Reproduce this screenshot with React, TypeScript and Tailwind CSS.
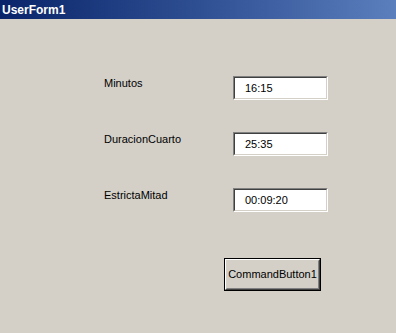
import React from "react";

const font = { fontFamily: '"Liberation Sans", Arial, sans-serif' };

function Box({ value }: { value: string }) {
  return (
    <div className="w-[95px] h-[24px] border border-t-[#808080] border-l-[#808080] border-b-white border-r-white">
      <div className="w-full h-full bg-white border border-t-[#404040] border-l-[#404040] border-b-[#d4d0c8] border-r-[#d4d0c8] flex items-center pl-[10px] text-[11px] text-black">
        {value}
      </div>
    </div>
  );
}

function Row({ label, value }: { label: string; value: string }) {
  return (
    <div className="flex items-start">
      <div className="w-[129px] pt-[1px] text-[11px] text-black leading-[13px]">{label}</div>
      <Box value={value} />
    </div>
  );
}

export default function App() {
  return (
    <div className="w-[396px] h-[333px] bg-[#d4d0c8] overflow-hidden" style={font}>
      <div className="h-[19px] bg-gradient-to-r from-[#0a246a] via-[#2f4f93] to-[#5b7fbd] flex items-center pl-[2px]">
        <span className="text-white font-bold text-[12px] leading-none">UserForm1</span>
      </div>
      <div className="pl-[104px] pt-[57px] flex flex-col gap-[32px]">
        <Row label="Minutos" value="16:15" />
        <Row label="DuracionCuarto" value="25:35" />
        <Row label="EstrictaMitad" value="00:09:20" />
      </div>
      <div className="pl-[224px] pt-[46px]">
        <div className="w-[97px] h-[33px] border border-black">
          <div className="w-full h-full border border-t-white border-l-white border-b-[#404040] border-r-[#404040]">
            <div className="w-full h-full border border-t-[#d4d0c8] border-l-[#d4d0c8] border-b-[#808080] border-r-[#808080] flex items-center justify-center text-[11px] text-black">
              CommandButton1
            </div>
          </div>
        </div>
      </div>
    </div>
  );
}
